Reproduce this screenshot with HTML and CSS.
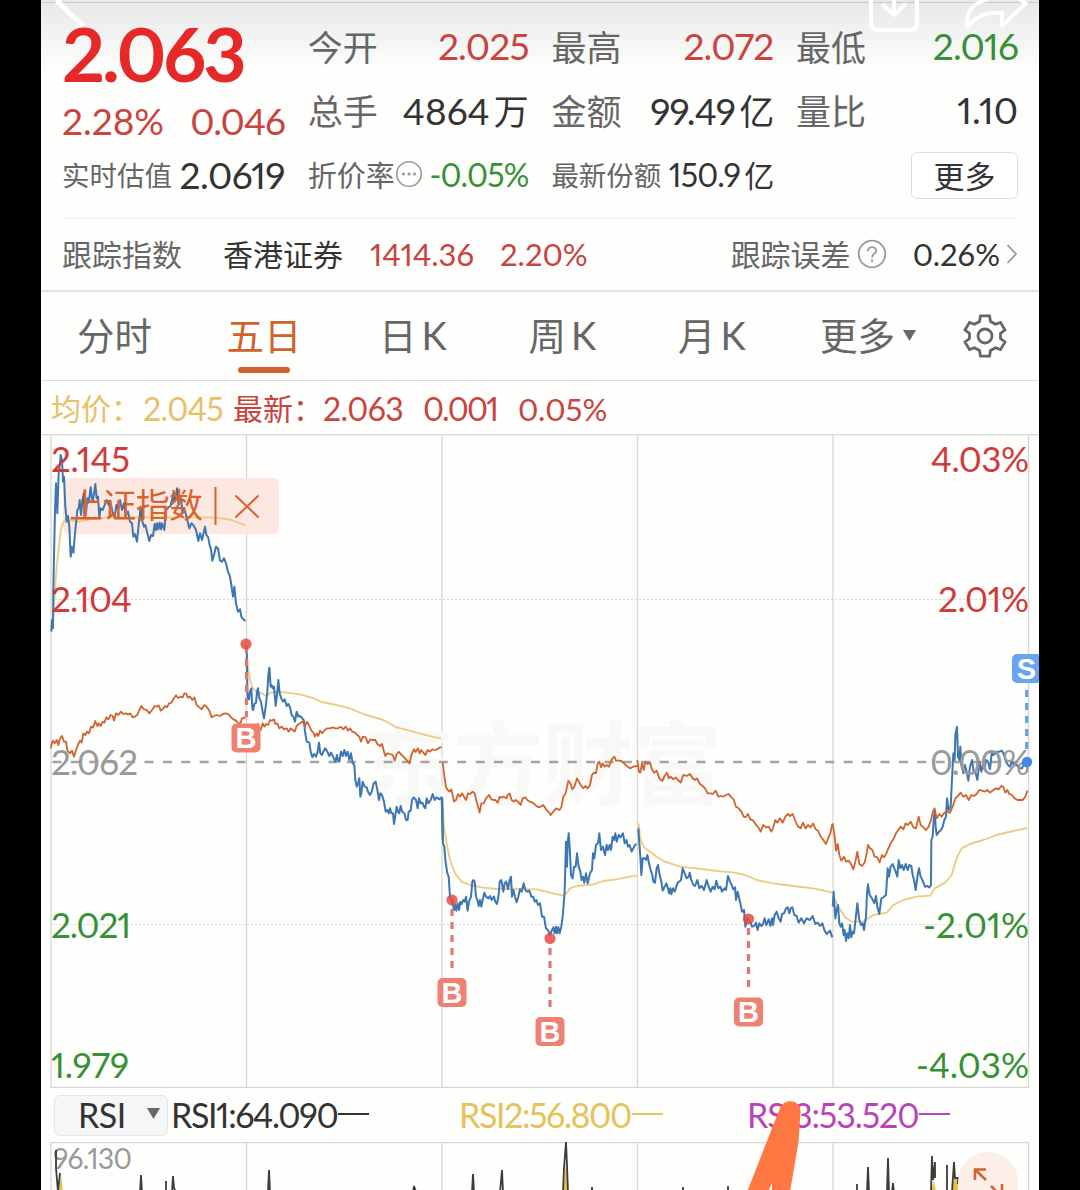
FILE: index.html
```html
<!DOCTYPE html>
<html lang="zh-CN">
<head>
    <meta charset="UTF-8">
    <meta name="viewport" content="width=device-width, initial-scale=1.0">
    <title>五日行情</title>
    <link rel="stylesheet" href="styles.css">
</head>
<body>
<div class="screen">
    <!-- Шапка: ціна та показники -->
    <header class="quote">
        <svg class="top-icons" width="998" height="36" viewBox="41 0 998 36">
            <path d="M41 2.5H1039" stroke="#c9c9c9" stroke-width="1"/>
            <g fill="none" stroke="#fff" stroke-width="4" stroke-linejoin="round">
                <path d="M62 -4L58 2L83 26" stroke-width="5"/>
                <path d="M871 -4V23Q871 30 878 30H910Q917 30 917 23V-4M894 -6V15M882 4L894 15L906 4"/>
                <path d="M1008 -8L1026 3L1002 26V13C986 12 977 16 967 27C965 10 976 2 988 -1"/>
            </g>
        </svg>
        <div class="price-box">
            <div class="price">2.063</div>
            <div class="change"><span>2.28%</span><span class="change-abs">0.046</span></div>
        </div>
        <div class="cell"><span class="name">今开</span><span class="num red">2.025</span></div>
        <div class="cell"><span class="name">最高</span><span class="num red">2.072</span></div>
        <div class="cell"><span class="name">最低</span><span class="num green">2.016</span></div>
        <div class="cell"><span class="name">总手</span><span class="num">4864<i>万</i></span></div>
        <div class="cell"><span class="name">金额</span><span class="num amount">99.49<i>亿</i></span></div>
        <div class="cell"><span class="name">量比</span><span class="num">1.10</span></div>
        <div class="cell small"><span class="name">实时估值</span><span class="num estimate">2.0619</span></div>
        <div class="cell small">
            <span class="name rate">折价率<svg width="28" height="28" viewBox="0 0 28 28"><circle cx="14" cy="14" r="12.3" fill="none" stroke="#999" stroke-width="1.6"/><g fill="#999"><circle cx="8.5" cy="14" r="1.6"/><circle cx="14" cy="14" r="1.6"/><circle cx="19.5" cy="14" r="1.6"/></g></svg></span>
            <span class="num green">-0.05%</span>
        </div>
        <div class="cell small"><span class="name">最新份额</span><span class="num shares">150.9<i>亿</i></span></div>
        <div class="cell"><button class="more">更多</button></div>
    </header>

    <div class="track">
        <span class="track-name">跟踪指数</span>
        <span class="track-index">香港证券</span>
        <span class="track-value">1414.36</span>
        <span class="track-pct">2.20%</span>
        <span class="track-error">跟踪误差</span>
        <svg width="30" height="30" viewBox="0 0 30 30" fill="none" stroke="#999" stroke-width="1.8"><circle cx="15" cy="15" r="13.3"/><path d="M10.8 12.2C10.8 6.6 19.4 6.9 19.2 12C19 15 15 14.8 15 18.5M15 20.5V23"/></svg>
        <span class="track-rate">0.26%</span>
        <svg class="arrow" width="12" height="22" viewBox="0 0 12 22" fill="none" stroke="#999" stroke-width="1.8"><path d="M1.5 2L10 11L1.5 20"/></svg>
    </div>

    <nav class="tabs">
        <a class="tab">分时</a>
        <a class="tab active">五日</a>
        <a class="tab">日<b>K</b></a>
        <a class="tab">周<b>K</b></a>
        <a class="tab tab-month">月<b>K</b></a>
        <a class="tab tab-more">更多<svg width="13" height="12" viewBox="0 0 13 12"><path d="M0 0H13L6.5 11Z" fill="#666"/></svg></a>
        <svg class="gear" width="46" height="46" viewBox="0 0 46 46" fill="none" stroke="#666" stroke-width="2.8"><path d="M18.5 2.8H27.5L28.5 8.5L33.5 11.3L38.5 9.4L43 17L38.5 20.5V25.5L43 29L38.5 36.6L33.5 34.7L28.5 37.5L27.5 43.2H18.5L17.5 37.5L12.5 34.7L7.5 36.6L3 29L7.5 25.5V20.5L3 17L7.5 9.4L12.5 11.3L17.5 8.5Z"/><circle cx="23" cy="23" r="7"/></svg>
    </nav>

    <div class="legend">
        <span class="avg label">均价：</span><span class="avg avg-value">2.045</span>
        <span class="label">最新：</span><span class="last">2.063</span><span class="diff">0.001</span><span class="diff-pct">0.05%</span>
    </div>

    <!-- Основний графік -->
    <svg class="chart" width="998" height="654" viewBox="41 434 998 654">
        <g class="grid">
            <path d="M41 434.5H1039M246.5 435V1087M442 435V1087M637.5 435V1087M833 435V1087"/>
            <path d="M51 435V1087.5H1028.5V435"/>
            <path class="dots" d="M51 599.5H1028M51 924.5H1028"/>
        </g>
        <text class="watermark" x="363" y="798" textLength="360">东方财富</text>
        <path class="base" d="M52.5 762H1028"/>

        <rect x="63" y="478" width="216" height="56" rx="6" fill="#fde8e1"/>

        <!-- день 1 -->
        <g class="day" transform="translate(40 430) scale(.33333)">
            <polyline class="avg-line" points="40,560 45,480 50,410 57,345 64,290 74,270 95,272 115,275 150,268 200,262 260,262 320,262 400,262 500,262 540,264 575,270 600,280 617,285"/>
            <polyline class="price-line" points="34,605 36,570 39,595 40,480 42,380 45,240 48,160 52,250 56,130 60,100 62,75 66,90 69,155 72,140 76,230 80,275 84,258 88,290 92,380 95,350 100,368 106,300 112,240 116,235 119,210 123,255 128,205 132,190 134,262 138,250 142,205 146,218 152,172 155,200 158,215 163,185 166,162 170,205 174,200 178,262 182,235 188,240 194,225 200,210 206,225 211,212 218,250 224,262 229,225 235,238 240,210 246,240 252,220 258,255 264,245 270,275 276,280 280,320 285,312 291,335 296,285 302,230 306,270 312,290 316,285 322,310 328,333 333,315 339,318 344,282 348,300 351,280 355,298 359,278 363,298 366,280 373,300 378,240 385,232 392,228 400,190 403,215 407,200 411,175 416,225 423,205 428,250 434,240 440,262 448,295 454,280 460,285 468,300 475,333 480,310 486,330 495,290 499,315 504,320 509,345 513,358 517,392 522,375 528,350 534,355 540,392 546,395 552,385 558,400 564,425 570,440 574,465 579,500 583,470 588,520 594,545 600,538 604,560 610,568 616,573"/>
            <polyline class="index-line" points="32,955 38,932 44,940 50,930 55,945 60,925 66,918 72,935 78,935 82,962 90,970 96,962 102,980 108,960 115,942 120,932 125,938 130,910 136,915 141,905 147,910 153,890 159,893 166,873 172,888 176,880 182,888 188,875 193,878 199,862 205,868 212,855 218,858 222,872 228,850 235,855 243,845 250,852 258,850 264,853 271,850 278,862 284,860 292,855 298,840 304,828 312,838 320,840 328,850 336,840 344,828 350,830 356,826 362,842 368,838 375,828 381,832 387,820 394,818 400,808 408,796 415,804 422,800 428,802 433,790 438,790 444,803 450,800 457,810 463,802 470,825 478,832 485,838 493,825 500,830 508,842 515,862 522,858 530,855 540,858 548,852 558,850 566,853 573,862 580,868 588,872 595,880 600,882 606,865 617,862"/>
        </g>
        <!-- день 2 -->
        <g class="day" transform="translate(240 620) scale(.33333)">
            <polyline class="avg-line" points="20,90 24,140 30,180 38,205 50,215 65,220 80,228 92,218 110,215 140,218 180,223 215,233 245,246 290,255 330,265 370,282 430,300 470,322 510,332 560,346 603,355"/>
            <polyline class="price-line" points="20,75 21,150 23,235 27,238 30,215 34,205 37,265 39,270 44,250 48,248 51,215 54,205 58,235 63,245 68,275 72,295 77,260 82,215 85,165 88,143 92,200 95,195 98,205 102,200 107,258 111,225 115,180 119,220 124,235 129,245 134,238 140,258 145,252 150,262 155,285 160,290 165,305 170,275 175,290 180,288 185,292 192,302 195,335 200,365 208,368 212,395 217,412 222,402 228,410 233,395 237,368 241,400 246,405 250,395 256,385 262,395 268,408 273,398 279,410 286,425 291,405 294,422 298,425 303,395 308,408 313,390 318,408 323,395 328,420 333,400 338,430 343,435 346,480 350,500 354,490 358,475 361,530 364,520 368,485 374,500 380,502 384,515 390,525 395,515 401,490 407,485 413,515 417,540 421,520 426,525 432,545 437,575 442,570 446,580 450,565 454,580 459,580 462,612 467,580 470,560 474,575 478,580 482,558 487,575 493,580 498,600 503,600 506,575 512,572 516,540 521,532 528,540 533,565 537,535 542,550 547,548 552,560 556,565 560,535 565,550 572,540 578,522 584,540 590,532 597,538 605,532 608,660"/>
            <polyline class="index-line" points="20,345 24,345 28,335 32,345 36,330 42,330 48,318 54,312 58,325 62,330 68,310 73,320 78,312 84,315 90,300 96,302 102,298 106,312 112,310 118,325 125,320 132,328 140,325 146,335 152,325 158,330 164,335 170,318 176,312 182,308 188,305 195,318 201,305 208,318 214,332 220,338 225,350 230,340 235,348 240,332 247,340 254,330 262,325 270,325 278,322 286,325 294,325 302,320 310,328 317,320 324,332 330,325 337,335 345,338 352,345 358,350 363,365 369,350 377,352 384,370 391,358 398,360 406,360 412,372 420,378 426,372 432,395 436,408 442,400 450,402 458,405 464,422 470,403 476,395 482,402 490,410 500,420 509,430 514,405 522,388 527,396 534,385 539,400 544,390 550,398 556,405 563,390 570,395 577,388 584,390 592,388 600,382 605,382"/>
        </g>
        <!-- день 3 -->
        <g class="day" transform="translate(430 700) scale(.33333)">
            <polyline class="avg-line" points="38,320 42,380 50,430 60,480 75,520 95,545 120,555 160,563 200,567 250,566 320,568 360,578 400,587 410,580 420,565 440,558 490,553 520,543 560,538 600,530 622,527"/>
            <polyline class="price-line" points="37,295 39,430 43,440 46,480 52,520 56,530 60,590 66,600 72,630 76,615 79,632 83,610 87,630 91,605 95,612 100,600 104,605 108,590 113,632 117,605 123,590 127,545 130,540 134,545 138,590 142,600 146,618 150,600 154,620 158,600 163,578 168,590 175,595 180,588 185,600 192,590 196,605 201,612 206,585 209,545 214,540 220,575 224,550 229,545 234,568 239,540 243,530 246,590 250,570 255,590 260,607 265,590 270,568 275,575 281,550 286,570 292,575 298,572 304,590 310,590 314,605 319,600 324,615 330,610 336,650 342,650 348,685 354,690 360,705 366,690 370,682 374,700 378,680 381,700 385,682 389,700 394,680 399,640 404,575 406,500 408,425 411,500 413,430 416,400 419,440 423,525 428,535 432,500 437,500 441,460 446,500 451,515 455,540 459,530 463,548 468,520 473,550 480,520 486,510 489,460 493,475 498,435 504,430 508,400 513,450 519,440 525,465 530,435 534,450 539,435 543,450 548,410 552,420 556,400 560,425 566,405 572,412 579,400 584,430 589,420 594,440 599,435 605,455 610,445 615,435 620,432"/>
            <polyline class="index-line" points="38,188 42,220 48,262 53,270 58,275 64,268 68,285 72,305 78,300 84,282 90,290 96,280 102,290 108,300 114,280 120,282 128,275 134,280 138,298 143,315 149,338 154,310 161,310 168,295 177,285 184,298 190,300 196,300 203,308 209,290 214,293 221,290 229,295 233,285 239,280 245,300 251,305 257,300 264,305 272,315 278,295 286,292 292,300 300,305 308,308 316,315 325,322 332,320 340,315 348,328 355,335 362,345 370,335 378,325 388,330 394,322 400,290 407,280 415,242 421,250 427,268 434,258 441,235 448,248 454,258 460,265 466,258 473,265 480,255 486,225 492,218 498,220 503,190 508,185 513,202 518,190 524,200 530,195 537,200 542,185 548,175 553,170 558,182 566,182 574,183 582,190 590,198 600,205 610,200 622,198"/>
        </g>
        <!-- день 4 -->
        <g class="day" transform="translate(630 700) scale(.33333)">
            <polyline class="avg-line" points="26,370 30,410 36,430 45,445 60,455 80,470 105,485 150,500 200,505 260,513 310,517 345,525 380,540 430,550 490,558 550,565 608,578"/>
            <polyline class="price-line" points="25,385 28,430 31,470 34,525 38,475 44,475 48,480 52,465 57,490 62,510 67,525 70,545 75,548 80,505 84,495 88,520 94,545 98,572 104,560 109,550 114,565 117,580 121,565 124,583 129,565 134,575 139,560 143,548 148,545 153,540 158,505 164,520 170,535 176,530 179,518 184,540 190,555 195,558 202,540 208,565 215,558 222,570 230,540 236,560 242,575 248,560 254,568 259,542 265,565 271,560 276,575 283,565 288,570 294,528 300,545 305,555 310,568 315,562 318,600 323,575 330,605 336,635 342,630 346,680 352,655 360,665 366,680 372,678 378,668 383,690 388,670 394,678 399,672 404,655 409,675 416,658 421,678 426,655 429,675 434,645 440,635 446,655 452,665 456,642 462,640 468,625 473,622 478,640 482,625 487,622 493,645 500,648 506,668 514,655 522,670 530,655 540,660 548,648 556,672 563,668 570,678 577,670 583,690 590,702 600,692 607,712"/>
            <polyline class="index-line" points="22,180 27,215 31,218 36,190 41,210 46,185 53,192 60,188 66,208 72,218 80,212 88,235 97,243 104,228 111,218 116,235 122,230 130,238 137,232 144,240 152,248 160,225 170,228 180,222 188,235 195,240 201,235 210,252 218,258 225,265 233,280 241,280 249,282 257,272 265,290 272,288 280,290 288,285 296,282 304,292 311,298 318,320 326,325 334,335 341,350 347,352 354,342 361,358 370,362 378,375 385,382 392,395 400,375 408,382 416,380 424,395 430,382 436,360 442,368 450,355 458,368 466,350 474,342 480,348 488,342 495,360 503,378 512,385 519,368 527,385 534,375 542,382 549,370 557,388 564,392 571,408 580,420 588,432 594,415 601,400 607,372"/>
        </g>
        <!-- день 5 -->
        <g class="day" transform="translate(820 640) scale(.33333)">
            <polyline class="avg-line" points="42,770 52,795 65,815 75,832 95,845 130,845 145,835 160,825 200,818 220,795 250,780 290,770 330,767 345,745 375,728 395,705 402,680 412,650 425,625 450,612 490,600 530,585 580,573 622,564"/>
            <polyline class="price-line" points="38,800 41,755 46,835 50,810 54,795 58,850 62,860 66,850 71,885 74,870 78,903 82,880 86,895 90,855 94,892 98,875 102,880 106,845 112,790 118,840 123,855 128,850 132,870 138,830 141,760 144,733 149,765 156,775 163,790 168,768 172,800 178,822 184,775 190,772 198,765 203,685 207,710 212,680 218,672 225,690 232,710 236,660 241,685 246,675 251,690 257,672 263,690 268,675 274,678 278,705 282,720 287,750 293,705 297,685 302,710 308,722 315,740 322,738 328,742 333,735 334,600 338,590 341,540 344,515 347,560 350,585 357,575 363,570 368,560 373,540 378,530 381,475 386,510 392,500 396,420 400,340 404,360 406,285 411,260 414,350 418,360 421,320 424,370 430,400 435,375 440,395 445,422 450,380 456,360 461,395 466,395 472,420 479,365 484,395 489,375 494,385 498,360 504,365 510,388 515,340 520,345 526,340 533,335 539,335 546,332 552,345 558,365 564,375 570,380 576,365 582,375 590,375 598,385 606,385 612,370 622,366"/>
            <polyline class="index-line" points="38,550 44,590 48,632 53,612 58,645 64,662 72,650 78,665 86,662 92,670 100,688 106,665 112,635 118,672 126,678 134,668 140,640 144,615 150,625 157,630 164,650 172,652 179,667 186,645 192,652 199,640 205,625 212,610 220,598 228,580 236,568 243,560 250,568 257,550 264,555 272,545 280,562 288,565 296,530 302,555 310,562 318,570 326,560 333,540 339,515 344,505 350,535 358,522 365,530 373,518 381,515 390,518 398,500 406,475 414,468 422,458 430,470 438,465 446,480 454,465 462,468 470,462 478,450 486,452 494,455 502,450 510,458 520,450 528,445 536,448 544,438 550,440 556,458 562,450 568,462 576,465 584,475 592,480 600,480 608,480 616,470 622,452"/>
        </g>

        <g class="axis">
            <text class="red" x="51" y="472" textLength="79">2.145</text>
            <text class="red" x="51" y="612" textLength="81">2.104</text>
            <text class="gray" x="51" y="774.5" textLength="87">2.062</text>
            <text class="green" x="51" y="938" textLength="80">2.021</text>
            <text class="green" x="51" y="1078" textLength="78">1.979</text>
            <text class="red" x="931" y="472" textLength="98">4.03%</text>
            <text class="red" x="938" y="612" textLength="91">2.01%</text>
            <text class="gray" x="930" y="774.5" textLength="100">0.00%</text>
            <text class="green" x="923" y="938" textLength="106">-2.01%</text>
            <text class="green" x="916" y="1078" textLength="113">-4.03%</text>
        </g>

        <g class="overlay">
            <text x="69" y="518" textLength="134">上证指数</text>
            <path d="M215.5 487V525M235.5 495.5L258.5 517.5M258.5 495.5L235.5 517.5"/>
        </g>

        <!-- Позначки купівлі та продажу -->
        <g class="mark buy">
            <path d="M246.5 646V717M452 909V972M550 948V1010M748.5 928V992"/>
            <circle cx="246" cy="644" r="5.6"/><circle cx="452" cy="900" r="5.6"/>
            <circle cx="550" cy="938.5" r="5.6"/><circle cx="748.5" cy="919" r="5.6"/>
            <rect x="231.5" y="723.5" width="29" height="29" rx="5"/><text x="246" y="748">B</text>
            <rect x="437.5" y="978" width="29" height="29" rx="5"/><text x="452" y="1002.5">B</text>
            <rect x="535.5" y="1017" width="29" height="29" rx="5"/><text x="550" y="1041.5">B</text>
            <rect x="734" y="997.5" width="29" height="29" rx="5"/><text x="748.5" y="1022">B</text>
        </g>
        <g class="mark sell">
            <path d="M1026.7 690V752"/>
            <circle cx="1027" cy="762" r="5.2"/>
            <rect x="1012" y="654" width="30" height="29" rx="5"/><text x="1026.5" y="678.5">S</text>
        </g>
    </svg>

    <div class="rsi">
        <div class="rsi-select">RSI<svg width="13" height="12" viewBox="0 0 13 12"><path d="M0 0H13L6.5 11Z" fill="#666"/></svg></div>
        <span class="rsi1">RSI1:64.090<i></i></span>
        <span class="rsi2">RSI2:56.800<i></i></span>
        <span class="rsi3">RSI3:53.520<i></i></span>
    </div>

    <svg class="sub-chart" width="998" height="48" viewBox="41 1142 998 48">
        <path class="frame" d="M51 1190V1142.5H1028.5V1190M246.5 1142V1190M442 1142V1190M637.5 1142V1190M833 1142V1190"/>
        <text x="53" y="1169" textLength="79">96.130</text>
        <path class="rsi-gold" d="M59 1192L61 1174L63 1192ZM563 1192L566 1162L568 1192ZM886 1192L888 1186L889 1192ZM931 1192L934 1180L936 1192ZM952 1192L954 1176L958 1181V1192Z"/>
        <path class="rsi-black" d="M56 1150V1168L58 1192L60 1173M140 1192L141 1175L142 1192M166 1192V1181M172 1192L173 1176L174 1188L176 1192M268 1192L269 1170L270 1192M413 1192L414 1186L416 1192M472 1192L473 1174L474 1192M500 1192L502 1170L503 1192M563 1192L564 1168L566 1142L567 1165L568 1192M592 1192V1187M683 1192V1187M728 1192V1186M857 1192V1184M867 1192L868 1167L869 1192M887 1192L888 1158L889 1192M892 1192L893 1183L894 1192M931 1192L932 1156L933 1180L935 1162L935 1178M947 1192V1165M952 1192L954 1162L955 1178L958 1178V1184"/>
        <circle cx="988" cy="1182" r="30" fill="#fbeee7"/>
        <path class="expand" d="M986 1169.500H975V1180M975.500 1170L986 1180M991 1186L1002 1197M1002 1184V1198"/>
    </svg>

    <svg class="pen" width="60" height="92" viewBox="745 1098 60 92"><path d="M747 1192L780 1108C784 1098 801 1099 800.500 1112L798.500 1142L790 1192H772L772 1183L768 1192Z"/></svg>
</div>
</body>
</html>
```
FILE: styles.css
```css
* {
    box-sizing: border-box;
}
body {
    margin: 0;
    background: #000;
    font-family: Lato, "Noto Sans CJK SC", sans-serif;
    font-variant-numeric: proportional-nums;
    color: #333;
}
i, b {
    font-style: normal;
    font-weight: normal;
}
svg {
    display: block;
    flex: none;
}
.screen {
    position: relative;
    width: 998px;
    height: 1190px;
    margin: 0 auto;
    overflow: hidden;
    background: #fefefd;
}
.quote {
    display: grid;
    grid-template-columns: 223px 221px 222px 222px;
    grid-template-rows: 64px 64px 64px;
    column-gap: 22.7px;
    height: 218px;
    padding: 15px 21px 0;
    background: linear-gradient(#e8e8e8, #fefefd 72px);
}
.top-icons {
    position: absolute;
    left: 0;
    top: 0;
}
.price-box {
    grid-row: span 2;
}
.price {
    height: 81px;
    line-height: 77px;
    font-size: 75px;
    font-weight: bold;
    letter-spacing: -3px;
    color: #e62828;
}
.change {
    display: flex;
    justify-content: space-between;
    line-height: 50px;
    font-size: 37px;
    color: #c9433f;
}
.change-abs {
    letter-spacing: -1px;
}
.cell {
    display: flex;
    align-items: center;
    justify-content: space-between;
    padding-bottom: 4px;
    white-space: nowrap;
}
.cell:last-child {
    justify-content: flex-end;
    padding-bottom: 0;
}
.name {
    font-size: 35px;
    color: #666;
}
.num {
    font-size: 37px;
}
.num.red, .num.green, .amount {
    letter-spacing: -.8px;
}
.num i {
    margin-left: 4px;
    font-size: 35px;
}
.small {
    padding-bottom: 2px;
}
.small .name {
    font-size: 27.500px;
}
.small .num {
    font-size: 32px;
}
.small .estimate {
    font-size: 37px;
    letter-spacing: -.5px;
}
.small .shares {
    letter-spacing: -.8px;
}
.small .num i {
    font-size: 30px;
}
.small .rate {
    display: flex;
    align-items: center;
    font-size: 29px;
}
.red {
    color: #c9433f;
}
.green {
    color: #359134;
}
.more {
    width: 107px;
    height: 47px;
    padding: 0;
    border: 1px solid #ddd;
    border-radius: 6px;
    background: #fff;
    font: 31px "Noto Sans CJK SC", sans-serif;
    line-height: 38px;
    color: #333;
}
.track {
    display: flex;
    align-items: center;
    height: 74px;
    padding: 0 21px;
    border-bottom: 2px solid #e3e3e3;
    font-size: 30px;
    background: linear-gradient(#f0f0f0, #f0f0f0) 21px 0 / 957px 1px no-repeat;
    white-space: nowrap;
}
.track-name, .track-error {
    color: #666;
}
.track-name, .track-index, .track-error {
    padding-bottom: 3px;
}
.track-name {
    width: 161px;
}
.track-index {
    width: 147px;
}
.track-value, .track-pct {
    font-size: 31px;
    color: #c9433f;
}
.track-value {
    width: 130px;
}
.track-error {
    margin-left: auto;
}
.track svg {
    margin-left: 6px;
}
.track-rate {
    margin-left: 26px;
    font-size: 31px;
}
.tabs {
    display: flex;
    align-items: center;
    height: 89px;
    padding-left: 36px;
    border-bottom: 1px solid #ddd;
}
.tab {
    position: relative;
    width: 149.500px;
    font-size: 37.500px;
    line-height: 88px;
    color: #666;
}
.tab b {
    margin-left: 5px;
    font-size: 38px;
    line-height: 40px;
}
.tab.active {
    width: 152.500px;
    color: #d2622b;
}
.active::after {
    content: "";
    position: absolute;
    left: 11px;
    bottom: 7px;
    width: 52px;
    height: 6px;
    border-radius: 3px;
    background: #d2622b;
}
.tab-month {
    width: 142px;
}
.tab-more {
    display: flex;
    align-items: center;
    gap: 8px;
    width: 142px;
}
.legend {
    display: flex;
    align-items: center;
    height: 53px;
    padding: 2px 10px 0;
    font-size: 30px;
    color: #c9433f;
}
.label {
    padding-bottom: 4px;
}
.legend .avg {
    color: #e8c068;
}
.avg-value, .last, .diff {
    font-size: 32px;
    letter-spacing: -.600px;
}
.avg-value {
    margin-left: 2px;
    width: 90px;
}
.last {
    width: 100px;
}
.diff {
    width: 95px;
    letter-spacing: -1.700px;
}
.diff-pct {
    font-size: 31px;
}
.grid path {
    fill: none;
    stroke: #d6d6d6;
    stroke-width: 1.300;
}
.grid .dots {
    stroke: #d8d8d8;
    stroke-width: 1;
    stroke-dasharray: 2 2;
}
.watermark {
    font-size: 91px;
    font-weight: bold;
    fill: #f8f8f7;
}
.base {
    stroke: #a3a3a3;
    stroke-width: 2.400;
    stroke-dasharray: 9 9.400;
}
.axis {
    font-size: 35px;
}
.axis .red {
    fill: #d03a3a;
}
.axis .green {
    fill: #359134;
}
.axis .gray {
    fill: #999;
}
.day {
    fill: none;
    stroke-linejoin: round;
}
.avg-line {
    stroke: #eccb83;
    stroke-width: 5.500;
}
.price-line {
    stroke: #3d76b3;
    stroke-width: 6;
}
.index-line {
    stroke: #d0642f;
    stroke-width: 5.400;
}
.overlay {
    font-size: 34px;
    fill: #d9622b;
}
.overlay path {
    stroke: #d9622b;
    stroke-width: 2;
}
.mark path {
    stroke-width: 3.200;
    stroke-dasharray: 7 6;
}
.mark text {
    font-family: "Liberation Sans", sans-serif;
    font-size: 29px;
    font-weight: bold;
    text-anchor: middle;
    fill: #fff;
}
.buy {
    fill: #f08072;
}
.buy path {
    stroke: #e07870;
}
.buy circle {
    fill: #e54a43;
    fill-opacity: .85;
}
.sell {
    fill: #68a4f2;
}
.sell path {
    stroke: #68a0e8;
}
.sell circle {
    fill: #4287ea;
}
.rsi {
    display: grid;
    grid-template-columns: 114px 288px 288px 1fr;
    align-items: center;
    height: 54px;
    padding-left: 13px;
    font-size: 34px;
}
.rsi > span {
    display: flex;
    align-items: center;
    padding: 0 0 2px 3px;
    letter-spacing: -1.400px;
}
.rsi .rsi3 {
    letter-spacing: -1.100px;
}
.rsi i {
    width: 31px;
    height: 2px;
    margin-left: 1px;
    background: currentColor;
}
.rsi-select {
    display: flex;
    align-items: center;
    justify-content: space-between;
    height: 41px;
    padding: 0 7px 2px 23px;
    border: 1px solid #e3e5e8;
    border-radius: 6px;
    background: #f5f6f8;
    letter-spacing: -.5px;
}
.rsi2 {
    color: #e4c35a;
}
.rsi3 {
    color: #b944b9;
}
.sub-chart text {
    font-size: 28px;
    fill: #999;
}
.frame, .rsi-black, .expand {
    fill: none;
    stroke: #d6d6d6;
    stroke-width: 1.300;
}
.rsi-black {
    stroke: #3c3c3c;
    stroke-width: 1.800;
}
.rsi-gold {
    fill: #e6c24c;
}
.expand {
    stroke: #d0642f;
    stroke-width: 2.600;
}
.pen {
    position: absolute;
    left: 704px;
    bottom: 0;
    fill: #ff7844;
}
```
